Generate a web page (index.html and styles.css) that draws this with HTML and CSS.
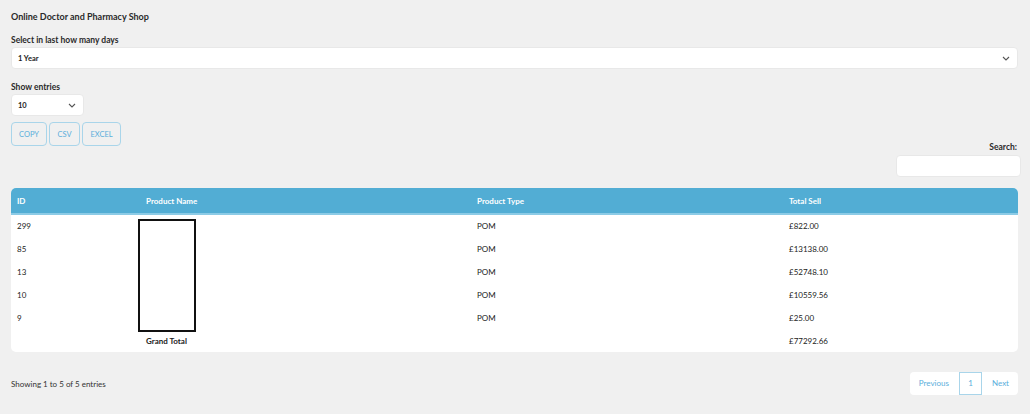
FILE: index.html
```html
<!DOCTYPE html>
<html lang="en">
<head>
<meta charset="utf-8">
<title>Sales Report</title>
<link rel="stylesheet" href="styles.css">
</head>
<body>
<main class="page">
  <h1 class="title">Online Doctor and Pharmacy Shop</h1>

  <label class="label days-label">Select in last how many days</label>
  <div class="select wide">
    <span>1 Year</span>
    <svg class="chev" width="8" height="5" viewBox="0 0 8 5"><path d="M1 1l3 3 3-3" fill="none" stroke="#555" stroke-width="1.1"/></svg>
  </div>

  <label class="label entries-label">Show entries</label>
  <div class="select small">
    <span>10</span>
    <svg class="chev" width="8" height="5" viewBox="0 0 8 5"><path d="M1 1l3 3 3-3" fill="none" stroke="#555" stroke-width="1.1"/></svg>
  </div>

  <div class="buttons">
    <button class="btn btn-copy">COPY</button>
    <button class="btn btn-csv">CSV</button>
    <button class="btn btn-excel">EXCEL</button>
  </div>

  <div class="search">
    <label class="label">Search:</label>
    <div class="search-input"></div>
  </div>

  <div class="table-wrap">
    <table class="report">
      <colgroup>
        <col class="c-id"><col class="c-name"><col class="c-type"><col class="c-sell">
      </colgroup>
      <thead>
        <tr><th>ID</th><th>Product Name</th><th>Product Type</th><th>Total Sell</th></tr>
      </thead>
      <tbody>
        <tr><td>299</td><td></td><td>POM</td><td>£822.00</td></tr>
        <tr><td>85</td><td></td><td>POM</td><td>£13138.00</td></tr>
        <tr><td>13</td><td></td><td>POM</td><td>£52748.10</td></tr>
        <tr><td>10</td><td></td><td>POM</td><td>£10559.56</td></tr>
        <tr><td>9</td><td></td><td>POM</td><td>£25.00</td></tr>
        <tr class="total"><td></td><td class="gt">Grand Total</td><td></td><td>£77292.66</td></tr>
      </tbody>
    </table>
    <div class="redact"></div>
  </div>

  <div class="footer">
    <span class="info">Showing 1 to 5 of 5 entries</span>
    <nav class="pager">
      <span class="pg">Previous</span>
      <span class="pg current">1</span>
      <span class="pg">Next</span>
    </nav>
  </div>
</main>
</body>
</html>
```

FILE: styles.css
```css
* { box-sizing: border-box; }

html, body {
  margin: 0;
  background: #f0f0f0;
}

body {
  font-family: "Lato", "Liberation Sans", sans-serif;
  font-size: 8.5px;
  color: #222;
}

.page {
  padding: 11px 12px 0 11px;
  width: 1030px;
}

.title {
  margin: 0;
  font-size: 9px;
  font-weight: 700;
  line-height: 11px;
  color: #2a2a2a;
}

.label {
  display: block;
  font-weight: 700;
  font-size: 8.5px;
  line-height: 10px;
  color: #2a2a2a;
}

.days-label { margin-top: 13px; }
.entries-label { margin-top: 13px; }

.select {
  display: flex;
  align-items: center;
  justify-content: space-between;
  height: 22px;
  background: #fff;
  border: 1px solid #e8e8e8;
  border-radius: 4px;
  padding: 0 7px 0 6px;
  font-size: 7.5px;
  font-weight: 700;
  color: #222;
  margin-top: 2px;
}

.select.wide { width: 1007px; }
.select.small { width: 73px; }

.chev { display: block; }

.buttons {
  display: flex;
  gap: 2px;
  margin-top: 6px;
}

.btn {
  height: 24px;
  background: #f0f0f0;
  border: 1px solid #a9d5ea;
  border-radius: 4px;
  color: #5aaedb;
  font-family: inherit;
  font-size: 7.5px;
  font-weight: 400;
  padding: 0;
}
.btn-copy { width: 36px; }
.btn-csv { width: 31px; }
.btn-excel { width: 39px; }

.search {
  display: flex;
  flex-direction: column;
  align-items: flex-end;
  margin-top: -4px;
  margin-right: -3px;
}

.search .label {
  padding-right: 4px;
}

.search-input {
  width: 125px;
  height: 22px;
  margin-top: 3px;
  background: #fff;
  border: 1px solid #e8e8e8;
  border-radius: 4px;
}

.table-wrap {
  position: relative;
  margin-top: 11px;
  width: 1007px;
  background: #fff;
  border-radius: 5px;
  overflow: hidden;
}

.report {
  width: 100%;
  border-collapse: collapse;
  table-layout: fixed;
}

.c-id { width: 129px; }
.c-name { width: 331px; }
.c-type { width: 312px; }
.c-sell { width: 235px; }

.report th {
  background: #52add4;
  color: #fff;
  text-align: left;
  font-weight: 700;
  font-size: 8px;
  height: 26px;
  padding: 0 6px;
  border-bottom: 2px solid #8ccbe6;
}

.report td {
  height: 23px;
  padding: 0 6px;
  font-size: 8px;
  color: #222;
}

.report .gt { font-weight: 700; }

.redact {
  position: absolute;
  left: 127px;
  top: 31px;
  width: 58px;
  height: 113px;
  border: 2px solid #111;
  background: #fff;
}

.footer {
  display: flex;
  justify-content: space-between;
  align-items: center;
  margin-top: 20px;
  width: 1007px;
}

.info {
  font-size: 8px;
  color: #333;
}

.pager {
  display: flex;
  align-items: center;
  height: 23px;
  background: #fff;
  border-radius: 4px;
}

.pg {
  color: #5aaedb;
  font-size: 8px;
  height: 23px;
  line-height: 21px;
  padding: 0 8px;
  border: 1px solid transparent;
}

.pg.current {
  border-color: #a9d5ea;
  width: 23px;
  padding: 0;
  text-align: center;
  margin: 0 1px;
}
```
